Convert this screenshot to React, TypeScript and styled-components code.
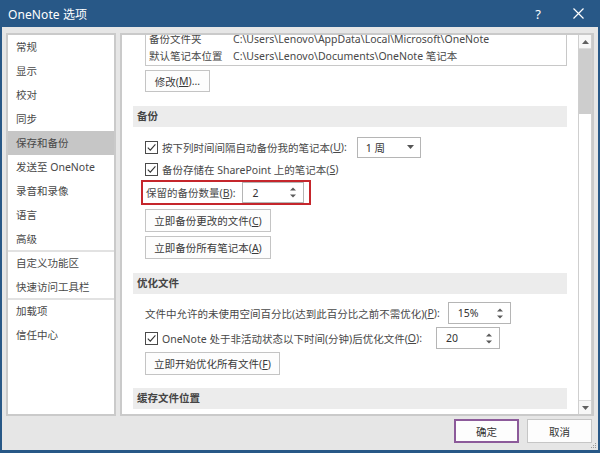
import { useLayoutEffect, useRef } from "react";
import styled, { createGlobalStyle } from "styled-components";

const GlobalStyle = createGlobalStyle`
  html, body {
    margin: 0;
    padding: 0;
    background: #ffffff;
  }
  body {
    font-family: "Noto Sans", "Noto Sans CJK SC", sans-serif;
  }
  * {
    box-sizing: border-box;
  }
`;

const navItems: ReadonlyArray<ReadonlyArray<string>> = [
  ["常规", "显示", "校对", "同步", "保存和备份", "发送至 OneNote", "录音和录像", "语言", "高级"],
  ["自定义功能区", "快速访问工具栏"],
  ["加载项", "信任中心"],
];

const Mn = ({ label, k, tail = "" }: { label: string; k: string; tail?: string }) => (
  <>
    {label}(<u>{k}</u>){tail}
  </>
);

const CheckIcon = () => (
  <svg width="11" height="11" viewBox="0 0 11 11">
    <path d="M1.8 5.6 L4.3 8.2 L9.4 2.4" fill="none" stroke="#333" strokeWidth="1.1" />
  </svg>
);

const SpinArrows = () => (
  <svg width="6" height="11" viewBox="0 0 6 11">
    <polygon points="0,3.5 3,0.5 6,3.5" fill="#5a5a5a" />
    <polygon points="0,7.5 6,7.5 3,10.5" fill="#5a5a5a" />
  </svg>
);

const App = () => {
  const viewRef = useRef<HTMLDivElement>(null);
  useLayoutEffect(() => {
    // the options page is scrolled a little, so the top of the path box is hidden
    if (viewRef.current) viewRef.current.scrollTop = 8;
  }, []);

  return (
    <>
      <GlobalStyle />
      <Window>
        <TitleBar>
          <TitleText>OneNote 选项</TitleText>
          <TitleButton>?</TitleButton>
          <TitleButton>
            <svg width="11" height="11" viewBox="0 0 11 11">
              <path d="M0.5 0.5 L10.5 10.5 M10.5 0.5 L0.5 10.5" stroke="#fff" strokeWidth="1.2" />
            </svg>
          </TitleButton>
        </TitleBar>
        <Frame>
          <Body>
            <NavPanel>
              {navItems.map((group, gi) => (
                <div key={gi}>
                  {gi > 0 && <NavSeparator />}
                  {group.map((item) => (
                    <NavItem key={item} $active={item === "保存和备份"}>
                      {item}
                    </NavItem>
                  ))}
                </div>
              ))}
            </NavPanel>
            <ContentPanel>
              <Viewport ref={viewRef}>
                <Content>
                  <Group>
                    <PathBox>
                      <PathRow>
                        <PathLabel>备份文件夹</PathLabel>
                        <span>C:\Users\Lenovo\AppData\Local\Microsoft\OneNote</span>
                      </PathRow>
                      <PathRow>
                        <PathLabel>默认笔记本位置</PathLabel>
                        <span>C:\Users\Lenovo\Documents\OneNote 笔记本</span>
                      </PathRow>
                    </PathBox>
                    <Button $top={4} $width={65} $height={22}>
                      <Mn label="修改" k="M" tail="..." />
                    </Button>
                  </Group>

                  <SectionHeader $top={14}>备份</SectionHeader>
                  <Group $top={9}>
                    <OptionRow>
                      <CheckBox>
                        <CheckIcon />
                      </CheckBox>
                      <Mn label="按下列时间间隔自动备份我的笔记本" k="U" tail=":" />
                      <Select>
                        <span>1 周</span>
                        <svg width="7" height="4" viewBox="0 0 7 4">
                          <polygon points="0,0 7,0 3.5,4" fill="#555" />
                        </svg>
                      </Select>
                    </OptionRow>
                    <OptionRow>
                      <CheckBox>
                        <CheckIcon />
                      </CheckBox>
                      <Mn label="备份存储在 SharePoint 上的笔记本" k="S" />
                    </OptionRow>
                    <Highlight>
                      <Mn label="保留的备份数量" k="B" tail=":" />
                      <Spinner $width={62} $height={21} $left={7}>
                        <span>2</span>
                        <SpinArrows />
                      </Spinner>
                    </Highlight>
                    <Button $top={4} $width={126} $height={23}>
                      <Mn label="立即备份更改的文件" k="C" />
                    </Button>
                    <Button $top={4} $width={126} $height={23}>
                      <Mn label="立即备份所有笔记本" k="A" />
                    </Button>
                  </Group>

                  <SectionHeader $top={14}>优化文件</SectionHeader>
                  <Group $top={8}>
                    <OptionRow>
                      <Mn label="文件中允许的未使用空间百分比(达到此百分比之前不需优化)" k="P" tail=":" />
                      <Spinner $width={63} $height={22} $left={8}>
                        <span>15%</span>
                        <SpinArrows />
                      </Spinner>
                    </OptionRow>
                    <OptionRow $top={3}>
                      <CheckBox>
                        <CheckIcon />
                      </CheckBox>
                      <Mn label="OneNote 处于非活动状态以下时间(分钟)后优化文件" k="O" tail=":" />
                      <Spinner $width={64} $height={22} $left={14}>
                        <span>20</span>
                        <SpinArrows />
                      </Spinner>
                    </OptionRow>
                    <Button $top={3} $width={135} $height={23}>
                      <Mn label="立即开始优化所有文件" k="F" />
                    </Button>
                  </Group>

                  <SectionHeader $top={13}>缓存文件位置</SectionHeader>
                </Content>
              </Viewport>
              <ScrollBar>
                <ScrollArrow>
                  <svg width="7" height="4" viewBox="0 0 7 4">
                    <polygon points="0,4 3.5,0 7,4" fill="#606060" />
                  </svg>
                </ScrollArrow>
                <ScrollThumb />
                <ScrollTrack />
                <ScrollArrow>
                  <svg width="7" height="4" viewBox="0 0 7 4">
                    <polygon points="0,0 7,0 3.5,4" fill="#606060" />
                  </svg>
                </ScrollArrow>
              </ScrollBar>
            </ContentPanel>
          </Body>
          <Footer>
            <DialogButton $primary>确定</DialogButton>
            <DialogButton>取消</DialogButton>
            <Grip>
              <svg width="6" height="6" viewBox="0 0 6 6">
                <rect x="4" y="0" width="1" height="1" fill="#9a9a9a" />
                <rect x="2" y="2" width="1" height="1" fill="#9a9a9a" />
                <rect x="4" y="2" width="1" height="1" fill="#9a9a9a" />
                <rect x="0" y="4" width="1" height="1" fill="#9a9a9a" />
                <rect x="2" y="4" width="1" height="1" fill="#9a9a9a" />
                <rect x="4" y="4" width="1" height="1" fill="#9a9a9a" />
              </svg>
            </Grip>
          </Footer>
        </Frame>
      </Window>
    </>
  );
};

const Window = styled.div`
  width: 600px;
  height: 453px;
  background: #285887;
  padding: 0 2px 3px 2px;
  display: flex;
  flex-direction: column;
  overflow: hidden;
`;

const TitleBar = styled.div`
  height: 27px;
  flex-shrink: 0;
  display: flex;
  align-items: center;
  padding-left: 6px;
  color: #ffffff;
  font-size: 12px;
`;

const TitleText = styled.div`
  flex: 1;
  letter-spacing: 0.1px;
`;

const TitleButton = styled.div`
  width: 40px;
  height: 27px;
  display: flex;
  align-items: center;
  justify-content: center;
  font-size: 13px;
  color: #ffffff;
`;

const Frame = styled.div`
  flex: 1;
  background: #e6e6e6;
  display: flex;
  flex-direction: column;
`;

const Body = styled.div`
  height: 389px;
  display: grid;
  grid-template-columns: 110px 1fr;
  gap: 4px;
  padding: 6px 4px 0 4px;
`;

const NavPanel = styled.div`
  background: #ffffff;
  border: 2px solid #cacaca;
`;

const NavItem = styled.div<{ $active?: boolean }>`
  height: 24px;
  line-height: 24px;
  padding-left: 8px;
  font-size: 10.5px;
  color: #484848;
  white-space: nowrap;
  background: ${(p) => (p.$active ? "#c6c6c6" : "transparent")};
`;

const NavSeparator = styled.div`
  height: 2px;
  margin: -1px 0;
  background: #e2e2e2;
  position: relative;
`;

const ContentPanel = styled.div`
  background: #ffffff;
  border: 2px solid #cacaca;
  display: flex;
  overflow: hidden;
`;

const Viewport = styled.div`
  flex: 1;
  overflow: hidden;
  height: 100%;
`;

const Content = styled.div`
  padding: 0 11px 30px 11px;
  font-size: 10.5px;
  color: #484848;
  white-space: nowrap;
`;

const SectionHeader = styled.div<{ $top?: number }>`
  height: 21px;
  line-height: 21px;
  margin-top: ${(p) => p.$top ?? 0}px;
  padding-left: 4px;
  background: #ececec;
  font-weight: 700;
  color: #444444;
`;

const Group = styled.div<{ $top?: number }>`
  margin-top: ${(p) => p.$top ?? 0}px;
  padding-left: 12px;
`;

const PathBox = styled.div`
  border: 1px solid #c8c8c8;
  padding: 3px 3px 0;
  overflow: hidden;
`;

const PathRow = styled.div`
  display: flex;
  height: 17px;
  line-height: 17px;
`;

const PathLabel = styled.span`
  width: 84px;
  flex-shrink: 0;
`;

const Button = styled.div<{ $top?: number; $width: number; $height: number }>`
  margin-top: ${(p) => p.$top ?? 0}px;
  width: ${(p) => p.$width}px;
  height: ${(p) => p.$height}px;
  display: flex;
  align-items: center;
  justify-content: center;
  background: #fdfdfd;
  border: 1px solid #c4c4c4;
  color: #3a3a3a;
`;

const OptionRow = styled.div<{ $top?: number }>`
  margin-top: ${(p) => p.$top ?? 0}px;
  height: 22px;
  display: flex;
  align-items: center;
`;

const CheckBox = styled.div`
  width: 13px;
  height: 13px;
  margin-right: 4px;
  border: 1px solid #4a4a4a;
  background: #ffffff;
  display: flex;
  align-items: center;
  justify-content: center;
  flex-shrink: 0;
`;

const Select = styled.div`
  width: 64px;
  height: 21px;
  margin-left: 10px;
  padding: 0 6px 0 8px;
  border: 1px solid #b5b5b5;
  display: flex;
  align-items: center;
  justify-content: space-between;
  color: #333333;
`;

const Spinner = styled.div<{ $width: number; $height: number; $left: number }>`
  width: ${(p) => p.$width}px;
  height: ${(p) => p.$height}px;
  margin-left: ${(p) => p.$left}px;
  padding: 0 7px 0 9px;
  border: 1px solid #b5b5b5;
  display: flex;
  align-items: center;
  justify-content: space-between;
  color: #333333;
`;

const Highlight = styled.div`
  width: fit-content;
  height: 25px;
  margin-left: -4px;
  padding: 0 5px 0 3px;
  border: 2px solid #c5262c;
  display: flex;
  align-items: center;
`;

const ScrollBar = styled.div`
  width: 14px;
  flex-shrink: 0;
  display: flex;
  flex-direction: column;
  border-left: 1px solid #cfcfcf;
  border-right: 1px solid #cfcfcf;
  background: #ffffff;
`;

const ScrollArrow = styled.div`
  height: 14px;
  flex-shrink: 0;
  display: flex;
  align-items: center;
  justify-content: center;
  background: #f7f7f7;
  border-bottom: 1px solid #dcdcdc;
  &:last-child {
    border-bottom: none;
    border-top: 1px solid #dcdcdc;
  }
`;

const ScrollThumb = styled.div`
  height: 65px;
  flex-shrink: 0;
  background: #cdcdcd;
`;

const ScrollTrack = styled.div`
  flex: 1;
  background: #ffffff;
`;

const Footer = styled.div`
  position: relative;
  flex: 1;
  display: flex;
  justify-content: flex-end;
  align-items: flex-start;
  gap: 8px;
  padding: 3px 6px 0 0;
`;

const DialogButton = styled.div<{ $primary?: boolean }>`
  width: 65px;
  height: 24px;
  display: flex;
  align-items: center;
  justify-content: center;
  background: #fdfdfd;
  border: ${(p) => (p.$primary ? "2px solid #8c5a9a" : "1px solid #c6c6c6")};
  font-size: 10.5px;
  color: #333333;
`;

const Grip = styled.div`
  position: absolute;
  right: 1px;
  bottom: 1px;
  line-height: 0;
`;

export default App;
